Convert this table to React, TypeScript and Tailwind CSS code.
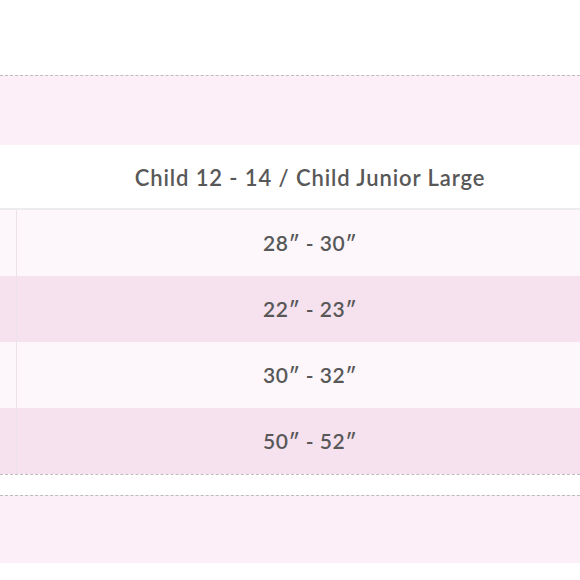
import React from 'react';

const rows = [
  { value: '28″ - 30″', dark: false },
  { value: '22″ - 23″', dark: true },
  { value: '30″ - 32″', dark: false },
  { value: '50″ - 52″', dark: true },
];

const App: React.FC = () => {
  return (
    <div className="w-[580px] h-[580px] overflow-hidden bg-white font-['Lato','Open_Sans',sans-serif] text-[#585858]">
      <div className="h-[75px]" />
      <div className="border-t-[1.5px] border-dashed border-[#bcbcbc] h-[70px] bg-[#fdeff8]" />
      <div className="w-[620px] h-[65px] flex items-center border-b-2 border-[#ececec]">
        <div className="w-[17px]" />
        <div className="w-[586px] pt-[2px] text-center text-[22px] font-semibold tracking-[0.9px]">
          Child 12 - 14 / Child Junior Large
        </div>
      </div>
      {rows.map((r, i) => (
        <div
          key={i}
          className={`w-[620px] h-[66px] flex ${r.dark ? 'bg-[#f6e1ee]' : 'bg-[#fdf7fb]'}`}
        >
          <div className="w-[17px] border-r border-[#ebe3e8]" />
          <div className="w-[586px] flex items-center justify-center text-[21px] font-semibold tracking-[0.5px]">
            {r.value}
          </div>
        </div>
      ))}
      <div className="border-t-[1.5px] border-dashed border-[#bcbcbc] h-[21px] bg-white" />
      <div className="border-t-[1.5px] border-dashed border-[#bcbcbc] h-[68px] bg-[#fdeff8]" />
    </div>
  );
};

export default App;
